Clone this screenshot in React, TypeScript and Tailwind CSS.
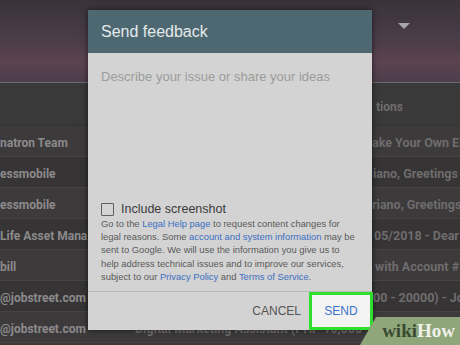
import React from "react";

const rows = [
  { left: "natron Team", right: "ake Your Own Exp", rx: "left-[372px]" },
  { left: "essmobile", right: "iano, Greetings from", rx: "left-[373px]" },
  { left: "essmobile", right: "riano, Greetings fr", rx: "left-[372px]" },
  { left: "Life Asset Mana.", right: "05/2018 - Dear Eri", rx: "left-[374px]" },
  { left: "bill", right: "with Account # 0", rx: "left-[375px]" },
  { left: "@jobstreet.com", right: "00 - 20000) - Job", rx: "left-[373px]" },
  { left: "@jobstreet.com", right: "Digital Marketing Assistant (PHP 15,000 - 25,000) - Job", rx: "left-[135px]" },
];

function Background() {
  return (
    <div className="flex flex-col w-[460px] h-[345px] bg-[#3a3939] font-['Roboto',sans-serif]">
      <div className="relative h-[40px] bg-gradient-to-b from-[#3a3239] to-[#4a3e4a]">
        <div className="absolute left-[398px] top-[23px] w-0 h-0 border-l-[6px] border-r-[6px] border-t-[6px] border-l-transparent border-r-transparent border-t-[#a9a4ab]" />
      </div>
      <div className="h-[43px] bg-gradient-to-b from-[#4a3c48] via-[#5c4350] to-[#4d3d4c] border-b border-[#6e6a6e]" />
      <div className="relative h-[43px] border-b border-[#343333]">
        <span className="absolute left-[376px] top-[15px] text-[12px] font-bold text-[#6f6c6e]">tions</span>
      </div>
      {rows.map((r, i) => (
        <div
          key={i}
          className={`relative h-[31px] shrink-0 overflow-hidden border-b border-[#444243] ${i % 2 === 0 ? "bg-[#3c3a3b]" : "bg-[#363435]"}`}
        >
          <span className="absolute left-0 top-[8px] text-[12px] font-bold text-[#8c8a8b] whitespace-nowrap">{r.left}</span>
          <span className={`absolute ${r.rx} top-[8px] text-[12.5px] font-bold text-[#6e6c6d] whitespace-nowrap`}>{r.right}</span>
        </div>
      ))}
    </div>
  );
}

function Link({ children }: { children: React.ReactNode }) {
  return <span className="text-[#3d6fc2]">{children}</span>;
}

function FeedbackDialog() {
  return (
    <div className="absolute left-[88px] top-[10px] w-[284px] flex flex-col shadow-[0_0_6px_rgba(0,0,0,0.6)] font-['Liberation_Sans',Arial,sans-serif]">
      <div className="h-[43px] bg-[#4e6872] flex items-center px-[13px]">
        <span className="text-[16px] text-[#e4eaec]">Send feedback</span>
      </div>
      <div className="h-[238px] bg-[#d3d3d3] flex flex-col pl-[13px] pr-[6px] pt-[14px]">
        <div className="text-[13px] text-[#9c9c9c]">Describe your issue or share your ideas</div>
        <div className="flex-1" />
        <div className="flex items-center gap-[7px]">
          <div className="w-[13px] h-[13px] border border-[#5f5f5f] rounded-[1px]" />
          <span className="text-[12.5px] text-[#3a3a3a]">Include screenshot</span>
        </div>
        <p className="-mt-[2px] mb-[8px] text-[9.4px] leading-[13.2px] text-[#5a5a5a] whitespace-nowrap">
          Go to the <Link>Legal Help page</Link> to request content changes for
          <br />
          legal reasons. Some <Link>account and system information</Link> may be
          <br />
          sent to Google. We will use the information you give us to
          <br />
          help address technical issues and to improve our services,
          <br />
          subject to our <Link>Privacy Policy</Link> and <Link>Terms of Service</Link>.
        </p>
      </div>
      <div className="h-[39px] bg-[#d3d3d3] border-t border-[#b9b9b9] flex items-stretch justify-end">
        <div className="flex items-center pr-[8px] text-[12px] text-[#555555]">CANCEL</div>
        <div className="w-[64px] bg-[#f3f3f3] border-[3px] border-[#2ee02e] flex items-center justify-center text-[12px] text-[#3d74c8] -mr-[1px]">
          SEND
        </div>
      </div>
    </div>
  );
}

function WikiHow() {
  return (
    <div className="absolute right-0 bottom-0 w-[100px] h-[28px] bg-[#8fa57a] [clip-path:polygon(16%_0,100%_0,100%_100%,0_100%)] flex items-center justify-end pr-[5px] font-['Liberation_Serif',serif] font-bold text-[19px]">
      <span className="text-[#3a4a30]">wiki</span>
      <span className="text-[#f0f2ea]">How</span>
    </div>
  );
}

export default function App() {
  return (
    <div className="relative w-[460px] h-[345px] overflow-hidden">
      <Background />
      <FeedbackDialog />
      <WikiHow />
    </div>
  );
}
